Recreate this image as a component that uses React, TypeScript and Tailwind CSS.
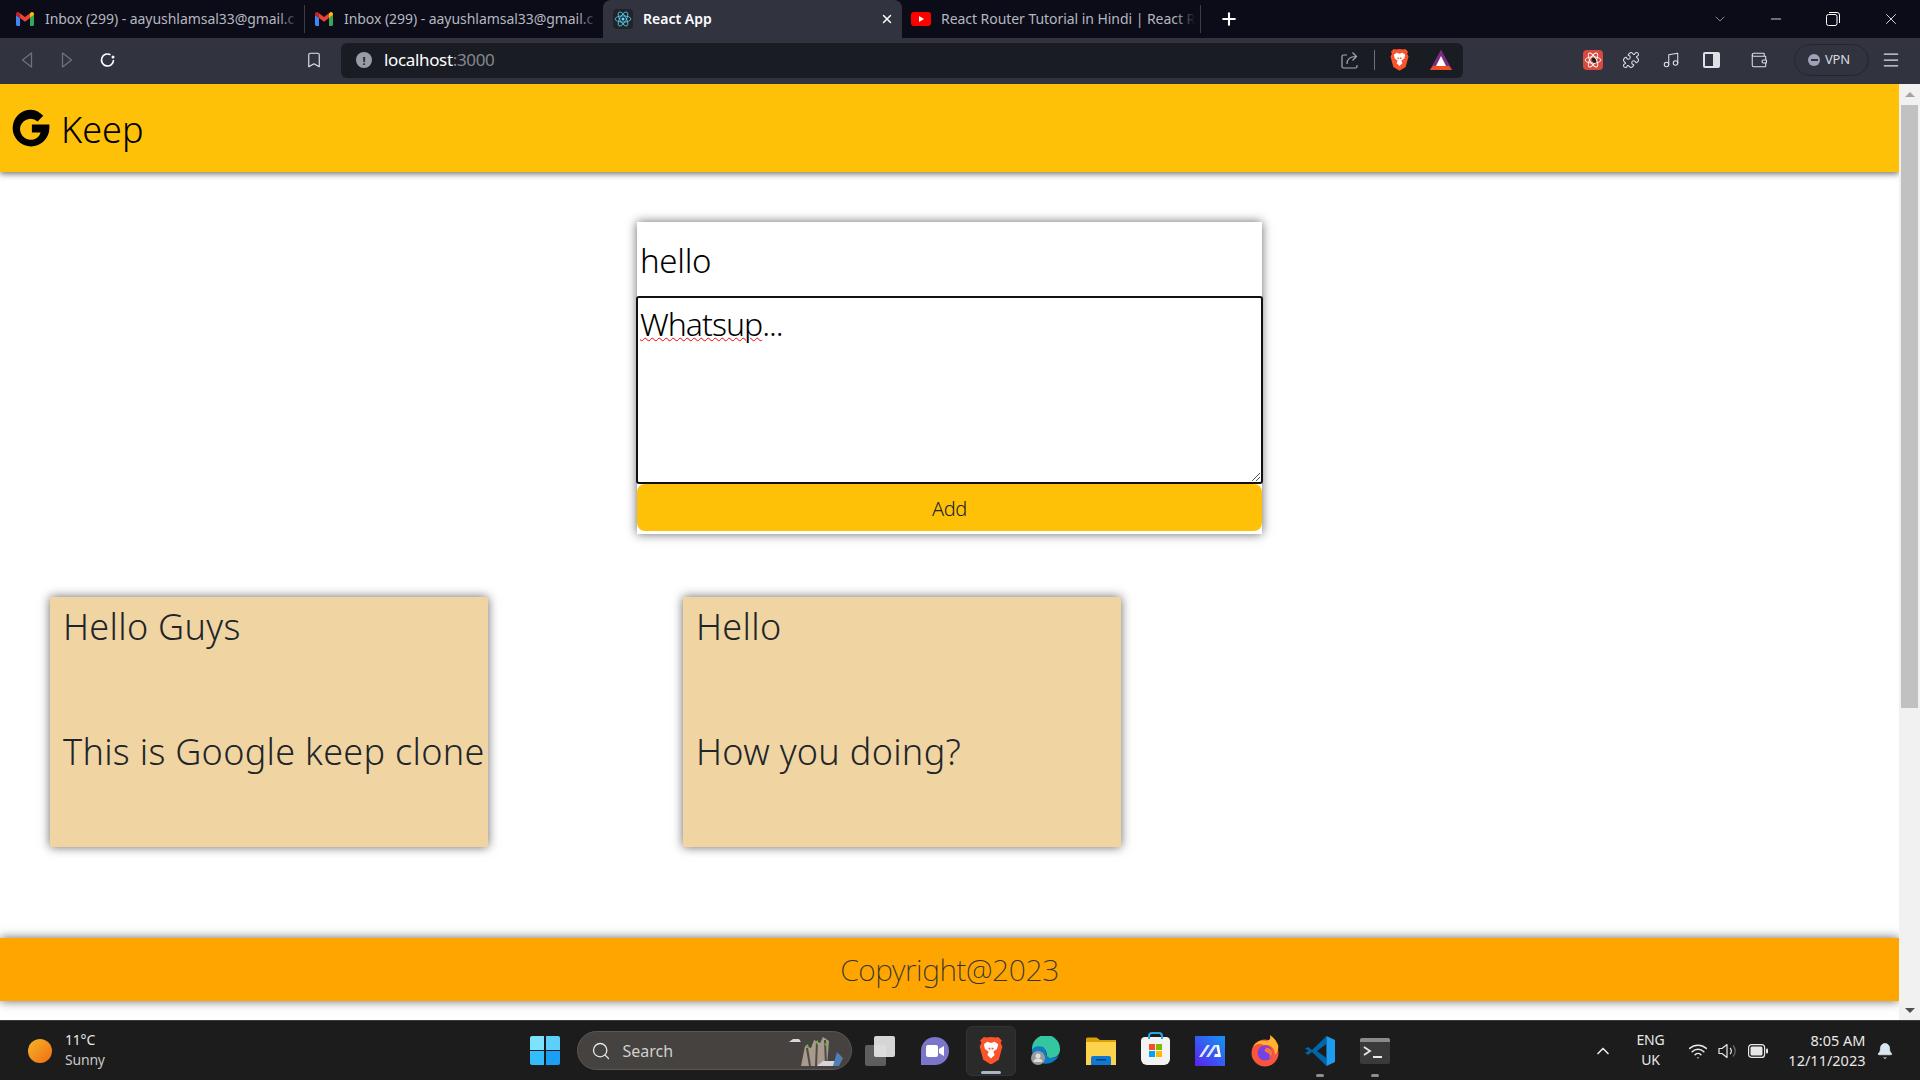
import { Bell, ChevronUp, Plus, Search, Wifi, X, Minus, ChevronDown, Menu, Bookmark, Music, Puzzle, Wallet } from 'lucide-react'

const ui = "font-['Noto_Sans',sans-serif]"

function GmailIcon() {
  return (
    <svg width="18" height="14" viewBox="0 0 18 14" className="shrink-0">
      <path d="M0 3v9.5A1.5 1.5 0 0 0 1.5 14H4V6z" fill="#4285f4" />
      <path d="M14 6v8h2.500A1.500 1.500 0 0 0 18 12.500V3z" fill="#34a853" />
      <path d="M4 6V1.200L9 5l5-3.800V6L9 9.800z" fill="#ea4335" />
      <path d="M0 3V2C0 .4 1.800-.5 3 .4l1 .8V6z" fill="#c5221f" />
      <path d="M14 6V1.200l1-.8C16.200-.5 18 .4 18 2v1z" fill="#fbbc04" />
    </svg>
  )
}

function ReactIcon() {
  return (
    <div className="flex h-5 w-5 shrink-0 items-center justify-center rounded-sm bg-[#20232a]">
      <svg width="18" height="18" viewBox="-12 -12 24 24" fill="none" stroke="#61dafb" strokeWidth="1">
        <circle r="2" fill="#61dafb" stroke="none" />
        <ellipse rx="10.500" ry="4.200" />
        <ellipse rx="10.500" ry="4.200" transform="rotate(60)" />
        <ellipse rx="10.500" ry="4.200" transform="rotate(120)" />
      </svg>
    </div>
  )
}

function BraveIcon({ size = 20 }: { size?: number }) {
  return (
    <svg width={size} height={size * 1.15} viewBox="0 0 20 23">
      <path d="M10 0l4 .5 2-.5 3 3-1 2 1.500 3-3 11L10 23l-6.500-4-3-11L2 5 1 3l3-3 2 .5z" fill="#fb542b" />
      <path d="M10 5l3-1 3 2-1 4-3 2 1 3-3 3-3-3 1-3-3-2-1-4 3-2z" fill="#fff" />
      <path d="M8 9h1.500v1.500H8zM10.500 9H12v1.500h-1.500z" fill="#fb542b" />
    </svg>
  )
}

// tab title with the browser's fade on the last letters
function TabTitle({ label }: { label: string }) {
  return (
    <div className="relative ml-[11px] w-[254px] whitespace-nowrap pb-[2px] text-[14px] tracking-[-0.05px] text-[#b5b7c0]">
      {label}
      <div className="absolute inset-y-0 right-0 w-5 bg-gradient-to-r from-transparent to-[#0b0c17]" />
    </div>
  )
}

function BrowserChrome() {
  return (
    <div className={ui}>
      {/* tab strip */}
      <div className="flex h-[38px] items-center bg-[#0b0c17]">
        <div className="ml-4 flex items-center">
          <GmailIcon />
          <TabTitle label="Inbox (299) - aayushlamsal33@gmail.c" />
        </div>
        <div className="ml-[5px] h-[28px] w-px bg-[#3a3c47]" />
        <div className="ml-[10px] flex items-center">
          <GmailIcon />
          <TabTitle label="Inbox (299) - aayushlamsal33@gmail.c" />
        </div>
        <div className="ml-[5px] flex h-[38px] w-[299px] items-center rounded-t-lg bg-[#31343f] pl-[10px] pr-[8px]">
          <ReactIcon />
          <span className="ml-[10px] flex-1 pb-[2px] text-[14px] font-semibold text-white">React App</span>
          <X size={14} strokeWidth={2.5} className="text-white" />
        </div>
        <div className="ml-[9px] flex h-[14px] w-5 items-center justify-center rounded-[3px] bg-[#f00]">
          <div className="h-0 w-0 border-y-[3.500px] border-l-[5px] border-y-transparent border-l-white" />
        </div>
        <div className="ml-[-1px]">
          <TabTitle label="React Router Tutorial in Hindi | React R" />
        </div>
        <div className="ml-[5px] h-[28px] w-px bg-[#3a3c47]" />
        <Plus size={20} strokeWidth={2.5} className="ml-[18px] text-white" />
        <ChevronDown size={16} strokeWidth={1} className="ml-[473px] text-[#c8c9cf]" />
        <Minus size={16} strokeWidth={1.2} className="ml-10 text-white" />
        <svg width="14" height="14" viewBox="0 0 14 14" fill="none" stroke="#fff" className="ml-[42px]">
          <rect x="0.500" y="2.500" width="10.500" height="11" rx="2" />
          <path d="M3 .5h8a2.500 2.500 0 0 1 2.500 2.500v8" />
        </svg>
        <X size={18} strokeWidth={1.1} className="ml-[42px] text-white" />
      </div>
      {/* toolbar */}
      <div className="flex h-[46px] items-center bg-[#31343f] pb-[2px]">
        <svg width="12" height="16" viewBox="0 0 12 16" fill="none" stroke="#6f727d" strokeWidth="1.300" className="ml-[21px]"><path d="M10.500 1v14L1.500 8z" strokeLinejoin="round" /></svg>
        <svg width="12" height="16" viewBox="0 0 12 16" fill="none" stroke="#6f727d" strokeWidth="1.300" className="ml-[28px]"><path d="M1.500 1v14l9-7z" strokeLinejoin="round" /></svg>
        <svg width="18" height="16" viewBox="0 0 18 16" fill="none" stroke="#fff" strokeWidth="1.600" className="ml-[26px]">
          <path d="M14.500 8a6 6 0 1 1-3-5.200" />
          <circle cx="14" cy="5" r="1.500" fill="#fff" stroke="none" />
        </svg>
        <Bookmark size={18} strokeWidth={1.5} className="ml-[188px] text-[#e6e6ea]" />
        <div className="ml-[18px] flex h-[35px] w-[1122px] items-center rounded-md bg-[#1a1c23]">
          <div className="ml-[15px] flex h-4 w-4 items-center justify-center rounded-full bg-[#9a9ca5] text-[11px] font-bold leading-none text-[#1a1c23]">!</div>
          <span className="ml-[12px] flex-1 text-[17px] tracking-[-0.35px] text-white">localhost<span className="text-[#85878f]">:3000</span></span>
          <svg width="18" height="18" viewBox="0 0 18 18" fill="none" stroke="#a7a9b0" strokeWidth="1.200">
            <path d="M6 4H2.500A1.500 1.500 0 0 0 1 5.500v10A1.500 1.500 0 0 0 2.500 17h12a1.500 1.500 0 0 0 1.500-1.500V14" />
            <path d="M6 13c0-5 3-7.500 9-7.500M11.500 1.500l4 4-4 4" />
          </svg>
          <div className="ml-[15px] h-5 w-px bg-[#6f717a]" />
          <div className="ml-[15px] flex"><BraveIcon size={19} /></div>
          <svg width="22" height="20" viewBox="0 0 22 20" className="ml-[21px] mr-[11px]">
            <path d="M11 0l11 20H0z" fill="#8a2f80" />
            <path d="M11 0l5.500 10L22 20H0L5.500 10z" fill="#7b2d83" />
            <path d="M11 6l5 10H6z" fill="#fff" />
            <path d="M0 20l3-4h16l3 4z" fill="#f04e23" />
          </svg>
        </div>
        <div className="ml-[120px] flex h-5 w-5 items-center justify-center rounded-sm bg-[#d8493f]">
          <svg width="18" height="18" viewBox="-12 -12 24 24" fill="none" stroke="#fff" strokeWidth="1.200">
            <ellipse rx="10.500" ry="4.200" />
            <ellipse rx="10.500" ry="4.200" transform="rotate(60)" />
            <ellipse rx="10.500" ry="4.200" transform="rotate(120)" />
            <ellipse cx="1" cy="1" rx="2.500" ry="4" fill="#222" stroke="none" transform="rotate(-30)" />
          </svg>
        </div>
        <Puzzle size={18} strokeWidth={1.4} className="ml-[19px] text-[#e0e1e6]" />
        <Music size={18} strokeWidth={1.4} className="ml-[22px] text-[#e0e1e6]" />
        <div className="ml-[23px] flex h-[16px] w-[17px] overflow-hidden rounded-[2px] border-2 border-[#e0e1e6]">
          <div className="ml-auto h-full w-[5px] bg-[#e0e1e6]" />
        </div>
        <Wallet size={18} strokeWidth={1.4} className="ml-[30px] text-[#e0e1e6]" />
        <div className="ml-[26px] flex h-[32px] w-[75px] items-center rounded-full border border-[#24262f] pl-[13px]">
          <div className="flex h-3 w-3 items-center justify-center rounded-full bg-[#a0a3b8]">
            <div className="h-[2px] w-[7px] bg-[#31343f]" />
          </div>
          <span className="ml-[5px] text-[13px] tracking-[-0.2px] text-[#d9dae0]">VPN</span>
        </div>
        <Menu size={20} strokeWidth={1.5} className="ml-[12px] text-[#e0e1e6]" />
      </div>
    </div>
  )
}

function NoteCard({ title, body }: { title: string; body: string }) {
  return (
    <div className="h-[250px] w-[438px] bg-[#f0d5a3] pl-[13px] text-[36px] font-light leading-[50px] tracking-[0.3px] text-[#212529] shadow-[0_0_10px_rgba(0,0,0,0.6)]">
      <div className="pt-[5px]">{title}</div>
      <div className="mt-[75px]">{body}</div>
    </div>
  )
}

function TaskIcon({ children, dot }: { children: React.ReactNode; dot?: boolean }) {
  return (
    <div className="relative flex h-[50px] w-[55px] items-center justify-center">
      {children}
      {dot && <div className="absolute bottom-[-1px] h-[3px] w-2 rounded-full bg-[#8e8e8e]" />}
    </div>
  )
}

function Taskbar() {
  return (
    <div className={`flex h-[60px] items-center border-t border-[#3a3a3a] bg-[#1c1c1c] text-[#e8e8e8] ${ui}`}>
      <div className="ml-[28px] h-6 w-6 rounded-full bg-gradient-to-br from-[#f3b52a] to-[#ef6a10]" />
      <div className="ml-[13px] flex w-[60px] flex-col pb-[2px] text-[14px] leading-[20px] tracking-[-0.2px]">
        <span>11°C</span>
        <span className="text-[#c8c8c8]">Sunny</span>
      </div>
      {/* windows logo */}
      <div className="ml-[405px] grid grid-cols-2 gap-[1.500px]">
        <div className="h-[14px] w-[14px] rounded-tl-[2px] bg-[#7de3fd]" />
        <div className="h-[14px] w-[14px] rounded-tr-[2px] bg-[#5ccffb]" />
        <div className="h-[14px] w-[14px] rounded-bl-[2px] bg-[#33bdfc]" />
        <div className="h-[14px] w-[14px] rounded-br-[2px] bg-[#1a9ff5]" />
      </div>
      <div className="ml-[17px] flex h-[39px] w-[275px] items-center rounded-full border border-[#5a5755] bg-[#45423f]">
        <Search size={20} strokeWidth={1.6} className="ml-[13px] text-[#e5e5e5]" />
        <span className="ml-[12px] text-[16px] text-[#d0d0d0]">Search</span>
        <svg width="60" height="34" viewBox="0 0 60 34" className="ml-auto mr-[4px]">
          <path d="M14 32l4-20 6 2 3-8 6 3 3-6 6 4-2 25z" fill="#a89a8c" />
          <path d="M20 14l3 18M30 8l-1 24M38 6l1 26" stroke="#4f4a46" strokeWidth="2" />
          <path d="M18 12l3-2 1 4zM28 8l3-2v5zM37 10l4-2-1 5z" fill="#6fae45" />
          <path d="M2 8h12l-2-3H6zM30 32h22l-3-5H36z" fill="#d8d6dc" />
          <path d="M50 18l6 6-4 8h-6z" fill="#4f7fb4" />
        </svg>
      </div>
      <div className="ml-[1px] flex items-center">
        <TaskIcon>
          <div className="relative h-[30px] w-[30px]">
            <div className="absolute bottom-0 left-0 h-[21px] w-[21px] rounded-[2px] bg-[#5e5e5e]" />
            <div className="absolute right-0 top-0 h-[21px] w-[21px] rounded-[2px] bg-[#eaeaea] opacity-90" />
          </div>
        </TaskIcon>
        <TaskIcon>
          <div className="flex h-[28px] w-[28px] items-center justify-center rounded-full rounded-bl-[4px] bg-[#7b76c9]">
            <svg width="18" height="12" viewBox="0 0 18 12"><rect width="12" height="12" rx="2" fill="#fff" /><path d="M13 4l5-3v10l-5-3z" fill="#fff" /></svg>
          </div>
        </TaskIcon>
        <div className="relative ml-[3px] flex h-[50px] w-[50px] items-center justify-center rounded-md border border-[#333] bg-[#2a2a2a]">
          <BraveIcon size={24} />
          <div className="absolute bottom-[1px] h-[3px] w-5 rounded-full bg-[#a9b8c4]" />
        </div>
        <div className="ml-[3px] flex w-[55px] justify-center">
          <svg width="30" height="30" viewBox="0 0 30 30">
            <path d="M1 14A14 14 0 0 1 29 12c.500 6-3 10-9 10-7 0-2-6-7-9-5-2-10 0-12 1z" fill="#34c6a0" />
            <path d="M1 14c1-3 6-5 11-3 5 3 1 11 8 11 3 0 6-1 8-3a14 14 0 0 1-27-5z" fill="#0c7cc4" />
            <circle cx="7" cy="22" r="7" fill="#9a9a9a" />
            <circle cx="7" cy="20" r="2.500" fill="#ddd" />
            <path d="M2.500 26a4.500 3.500 0 0 1 9 0z" fill="#ddd" />
          </svg>
        </div>
        <TaskIcon>
          <svg width="30" height="28" viewBox="0 0 30 28">
            <path d="M0 2a1.500 1.500 0 0 1 1.500-1.500h9L14 3h16v25H0z" fill="#d9a106" />
            <rect y="5" width="30" height="23" fill="#fcd34d" />
            <path d="M5 28v-7a2 2 0 0 1 2-2h16a2 2 0 0 1 2 2v7z" fill="#0f78d4" />
            <rect x="10" y="22" width="10" height="1.500" fill="#083f70" />
          </svg>
        </TaskIcon>
        <div className="relative ml-[-1px] flex h-[50px] w-[55px] items-center justify-center">
          <div className="relative h-[28px] w-[29px] rounded-b-md rounded-t-sm bg-[#f3f3f3]">
            <div className="absolute left-[7px] top-[-5px] h-[7px] w-[15px] rounded-t-sm border-2 border-b-0 border-[#2aa4e4]" />
            <div className="absolute left-[8px] top-[7px] grid grid-cols-2 gap-px">
              <div className="h-[6px] w-[6px] bg-[#f25022]" />
              <div className="h-[6px] w-[6px] bg-[#7fba00]" />
              <div className="h-[6px] w-[6px] bg-[#00a4ef]" />
              <div className="h-[6px] w-[6px] bg-[#ffb900]" />
            </div>
          </div>
        </div>
        <TaskIcon>
          <svg width="30" height="30" viewBox="0 0 30 30">
            <defs>
              <linearGradient id="ml" x1="0" y1="1" x2="1" y2="0">
                <stop offset="0" stopColor="#5b21f0" />
                <stop offset="1" stopColor="#1296f0" />
              </linearGradient>
            </defs>
            <rect width="30" height="30" fill="url(#ml)" />
            <path d="M4 21l8-12h3L7 21zM11 21l8-12h3l-8 12z" fill="#dfe6ff" />
            <path d="M21 9h3l2 12h-7l1-3h3z" fill="#fff" />
          </svg>
        </TaskIcon>
        <TaskIcon>
          <svg width="30" height="32" viewBox="0 0 30 32">
            <circle cx="15" cy="18" r="13.500" fill="#f9553c" />
            <path d="M3 12c4-4 8-4 10-2 6-1 12 2 12 10 4-4 4-10 2-12-1-3-4-6-7-8 1 4-1 6-4 6-5-1-10 0-13 6z" fill="#ffb32c" />
            <circle cx="15" cy="18" r="7.500" fill="#7542e5" />
            <path d="M8 16c2-3 6-4 9-3-3 1-3 3-1 4 3 1 5 3 3 6 3-1 4-5 3-7-2-4-10-5-14 0z" fill="#ff7139" />
          </svg>
        </TaskIcon>
        <TaskIcon dot>
          <svg width="30" height="30" viewBox="0 0 30 30">
            <path d="M21.500 0v30L7 16l-4 3-3-2.500L4 15 0 12.500 3 11l4 3z" fill="#0065a9" />
            <path d="M21.500 8v14L12 15z" fill="#1c1c1c" />
            <path d="M21.500 0L30 4v22l-8.500 4z" fill="#1f9cf0" />
          </svg>
        </TaskIcon>
        <TaskIcon dot>
          <div className="h-[26px] w-[30px] overflow-hidden rounded-[2px] bg-[#3a3a3a]">
            <div className="h-1 w-full bg-[#8a8a8a]" />
            <svg width="30" height="22" viewBox="0 0 30 22" fill="none" stroke="#e8e8e8" strokeWidth="1.800">
              <path d="M4 5l6 4-6 4" />
              <path d="M13 15h9" />
            </svg>
          </div>
        </TaskIcon>
      </div>
      <ChevronUp size={20} strokeWidth={2} className="ml-[190px] text-[#e8e8e8]" />
      <div className="ml-[13px] flex w-[50px] flex-col items-center pb-[2px] text-[14px] leading-[20px] tracking-[-0.2px]">
        <span>ENG</span>
        <span>UK</span>
      </div>
      <Wifi size={20} strokeWidth={1.8} className="ml-[12px] text-[#e8e8e8]" />
      <svg width="20" height="18" viewBox="0 0 20 18" fill="none" stroke="#e8e8e8" strokeWidth="1.200" className="ml-[10px]">
        <path d="M1 6.500v5h3l5 4v-13l-5 4z" strokeLinejoin="round" />
        <path d="M12 6a4 4 0 0 1 0 6" />
        <path d="M15 3.500a8 8 0 0 1 0 11" stroke="#6b6b6b" />
      </svg>
      <svg width="20" height="14" viewBox="0 0 20 14" className="ml-[10px]">
        <rect x="0.600" y="0.600" width="16" height="12.800" rx="3" fill="none" stroke="#e8e8e8" strokeWidth="1.200" />
        <rect x="2.500" y="2.500" width="12" height="9" rx="1.500" fill="#e8e8e8" />
        <rect x="18" y="4.500" width="2" height="5" rx="1" fill="#e8e8e8" />
      </svg>
      <div className="ml-[10px] flex w-[88px] flex-col items-end pb-[2px] text-[14.5px] leading-[20px]">
        <span>8:05 AM</span>
        <span>12/11/2023</span>
      </div>
      <Bell size={18} fill="#d9e6ee" strokeWidth={1} className="ml-[10px] text-[#d9e6ee]" />
    </div>
  )
}

export default function App() {
  return (
    <div className="flex h-[1080px] w-[1920px] flex-col overflow-hidden bg-white">
      <BrowserChrome />
      <div className="flex min-h-0 flex-1">
        <main className={`flex-1 overflow-hidden ${ui}`}>
          <header className="relative flex h-[88px] items-center bg-[#ffc107] pl-[10px] text-black shadow-[0_2px_6px_rgba(0,0,0,0.55)]">
            <svg width="42" height="42" viewBox="0 0 48 48" className="shrink-0">
              <path d="M24 3a21 21 0 1 0 21 21v-4H25v9h10a12 12 0 1 1-3.500-12.500l6.500-6.500A21 21 0 0 0 24 3z" fill="#000" />
            </svg>
            <span className="ml-[9px] pt-[4px] text-[36px] font-light leading-[54px]">Keep</span>
          </header>

          <form className="mx-auto mt-[50px] h-[312px] w-[625px] bg-white shadow-[0_0_10px_rgba(0,0,0,0.6)]">
            <div className="h-[74px] pl-[3px] pt-[15px] text-[33px] font-light leading-[48px] tracking-[-0.3px] text-black">hello</div>
            <div className="relative -mx-px h-[188px] rounded-[3px] border-2 border-[#111] pl-[2px] pt-[2px] text-[32px] font-light leading-[48px] tracking-[-1px] text-black">
              <span className="underline decoration-[#f00] decoration-wavy decoration-1 underline-offset-[1px]">Whatsup</span>...
              <svg width="10" height="10" viewBox="0 0 10 10" stroke="#555" className="absolute bottom-0 right-0">
                <path d="M1 9l8-8M5 9l4-4" />
              </svg>
            </div>
            <button type="button" className="block h-[47px] w-full rounded-lg bg-[#ffc107] pt-[2px] text-center text-[20px] font-light tracking-[-0.4px] text-[#212529]">Add</button>
          </form>

          <div className="ml-[50px] mt-[63px] flex gap-[195px]">
            <NoteCard title="Hello Guys" body="This is Google keep clone" />
            <NoteCard title="Hello" body="How you doing?" />
          </div>

          <footer className="mt-[91px] flex h-[63px] items-center justify-center bg-[#ffa500] text-[30px] font-extralight tracking-[-0.4px] text-[#333] shadow-[0_0_10px_rgba(0,0,0,0.6)]">
            Copyright@2023
          </footer>
        </main>
        <div className="flex w-[21px] flex-col items-center bg-[#f1f1f1]">
          <div className="mt-[8px] h-0 w-0 border-x-[5px] border-b-[5px] border-x-transparent border-b-[#a3a3a3]" />
          <div className="mt-[8px] h-[603px] w-[17px] bg-[#c1c1c1]" />
          <div className="mb-[7px] mt-auto h-0 w-0 border-x-[5px] border-t-[5px] border-x-transparent border-t-[#505050]" />
        </div>
      </div>
      <Taskbar />
    </div>
  )
}
